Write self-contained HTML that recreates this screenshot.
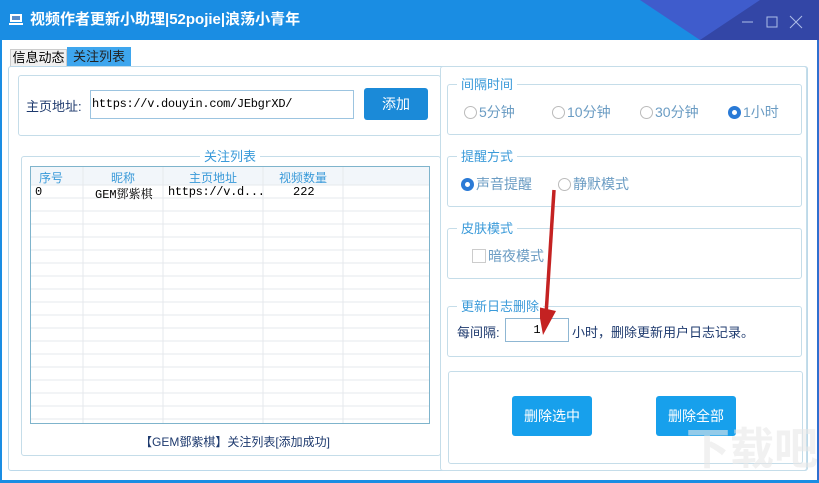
<!DOCTYPE html>
<html><head><meta charset="utf-8"><style>
*{margin:0;padding:0;box-sizing:border-box}
body{width:819px;height:483px;overflow:hidden;background:#fff;font-family:"Liberation Sans","Noto Sans CJK SC",sans-serif;font-size:13px;position:relative}
.a{position:absolute}
.box{position:absolute;border:1px solid #c5dde9;border-radius:3px}
.lg{position:absolute;background:#fff;color:#3a9ad9;padding:0 4px;font-size:13px;line-height:16px}
.rb{position:absolute;font-size:14px;color:#6b9cc3;line-height:16px;display:flex;align-items:center}
.rb i{display:inline-block;width:13px;height:13px;border:1px solid #bbb;border-radius:50%;margin-right:2px;background:#fff}
.rb i.on{border:4px solid #2a7ad6;}
.btn{position:absolute;background:#17a0ec;color:#fff;border-radius:3px;display:flex;align-items:center;justify-content:center;font-size:14px}
.mono{font-family:"Liberation Mono","Noto Serif CJK SC",monospace}
</style></head><body>
<div class="a" style="left:0;top:0;width:819px;height:40px;background:#1a8de3;overflow:hidden">
<svg class="a" style="left:0;top:0" width="819" height="40"><polygon points="640,0 819,0 819,40 700,40" fill="#3f5ccc"/><polygon points="760,0 819,0 819,40 700,40" fill="#3346a6"/></svg>
<svg class="a" style="left:9px;top:13px" width="16" height="14"><rect x="1" y="1" width="12" height="8" fill="#fff"/><rect x="3" y="3" width="8" height="4" fill="#5b8cc9"/><rect x="0" y="10" width="14" height="2" fill="#fff"/></svg>
<div class="a" style="left:30px;top:11px;color:#fff;font-size:15px;font-weight:bold;line-height:18px">视频作者更新小助理|52pojie|浪荡小青年</div>
<svg class="a" style="left:740px;top:14px" width="70" height="16"><line x1="2" y1="8" x2="13" y2="8" stroke="#aebde8"/><rect x="27" y="3" width="10" height="10" fill="none" stroke="#aebde8"/><path d="M50 2 L62 14 M62 2 L50 14" stroke="#aebde8"/></svg>
</div>
<div class="a" style="left:0;top:40px;width:2px;height:443px;background:#1a8de3"></div>
<div class="a" style="right:0;top:40px;width:2px;height:443px;background:#2f6fcf"></div>
<div class="a" style="left:0;top:480px;width:819px;height:3px;background:#1a8de3"></div>
<div class="a" style="left:10px;top:49px;width:57px;height:18px;background:#f0f0f0;border:1px solid #ccc;font-size:13px;line-height:16px;text-align:center">信息动态</div>
<div class="a" style="left:67px;top:47px;width:64px;height:20px;background:#3ea6ee;font-size:13px;line-height:20px;text-align:center;color:#222">关注列表</div>
<div class="box" style="left:8px;top:66px;width:800px;height:405px;border-color:#bcd9ea"></div>
<div class="box" style="left:18px;top:75px;width:423px;height:61px"></div>
<div class="a" style="left:26px;top:96px;color:#1e3a6e;font-size:13px">主页地址:</div>
<div class="a mono" style="left:90px;top:90px;width:264px;height:29px;border:1px solid #9cc4e0;font-size:12px;line-height:27px;padding-left:1px;letter-spacing:-0.3px">https://v.douyin.com/JEbgrXD/</div>
<div class="btn" style="left:364px;top:88px;width:64px;height:32px;background:#1b8ad8">添加</div>
<div class="box" style="left:21px;top:156px;width:420px;height:300px"></div>
<div class="lg" style="left:200px;top:149px">关注列表</div>
<div class="a" style="left:30px;top:166px;width:400px;height:258px;border:1px solid #7fb4cc;overflow:hidden;background:#fff">
<svg class="a" style="left:0;top:0" width="400" height="258">
<rect x="0" y="0" width="400" height="18" fill="#f2f6fa"/>
<g stroke="#e6e9ec">
<line x1="0" y1="18" x2="400" y2="18"/><line x1="0" y1="31" x2="400" y2="31"/><line x1="0" y1="44" x2="400" y2="44"/><line x1="0" y1="57" x2="400" y2="57"/><line x1="0" y1="70" x2="400" y2="70"/><line x1="0" y1="83" x2="400" y2="83"/><line x1="0" y1="96" x2="400" y2="96"/><line x1="0" y1="109" x2="400" y2="109"/><line x1="0" y1="122" x2="400" y2="122"/><line x1="0" y1="135" x2="400" y2="135"/><line x1="0" y1="148" x2="400" y2="148"/><line x1="0" y1="161" x2="400" y2="161"/><line x1="0" y1="174" x2="400" y2="174"/><line x1="0" y1="187" x2="400" y2="187"/><line x1="0" y1="200" x2="400" y2="200"/><line x1="0" y1="213" x2="400" y2="213"/><line x1="0" y1="226" x2="400" y2="226"/><line x1="0" y1="239" x2="400" y2="239"/><line x1="0" y1="252" x2="400" y2="252"/>
<line x1="52" y1="0" x2="52" y2="258"/><line x1="132" y1="0" x2="132" y2="258"/><line x1="232" y1="0" x2="232" y2="258"/><line x1="312" y1="0" x2="312" y2="258"/>
</g></svg>
<div class="a" style="left:8px;top:2px;color:#3a9ad9;font-size:12px">序号</div>
<div class="a" style="left:80px;top:2px;color:#3a9ad9;font-size:12px">昵称</div>
<div class="a" style="left:158px;top:2px;color:#3a9ad9;font-size:12px">主页地址</div>
<div class="a" style="left:248px;top:2px;color:#3a9ad9;font-size:12px">视频数量</div>
<div class="a mono" style="left:4px;top:18px;font-size:12px">0</div>
<div class="a mono" style="left:64px;top:18px;font-size:12px">GEM鄧紫棋</div>
<div class="a mono" style="left:137px;top:18px;font-size:12px;letter-spacing:-0.3px">https://v.d...</div>
<div class="a mono" style="left:262px;top:18px;font-size:12px">222</div>
</div>
<div class="a" style="left:140px;top:433px;color:#1e3a6e;font-size:12px">【GEM鄧紫棋】关注列表[添加成功]</div>
<div class="box" style="left:440px;top:66px;width:367px;height:405px;border-color:#c5dde9"></div>
<div class="box" style="left:447px;top:84px;width:355px;height:51px"></div>
<div class="lg" style="left:457px;top:77px">间隔时间</div>
<div class="rb" style="left:464px;top:104px"><i></i>5分钟</div>
<div class="rb" style="left:552px;top:104px"><i></i>10分钟</div>
<div class="rb" style="left:640px;top:104px"><i></i>30分钟</div>
<div class="rb" style="left:728px;top:104px"><i class="on"></i>1小时</div>
<div class="box" style="left:447px;top:156px;width:355px;height:51px"></div>
<div class="lg" style="left:457px;top:149px">提醒方式</div>
<div class="rb" style="left:461px;top:176px"><i class="on"></i>声音提醒</div>
<div class="rb" style="left:558px;top:176px"><i></i>静默模式</div>
<div class="box" style="left:447px;top:228px;width:355px;height:51px"></div>
<div class="lg" style="left:457px;top:221px">皮肤模式</div>
<div class="rb" style="left:472px;top:248px"><i style="border-radius:0;width:14px;height:14px;border-color:#ccc"></i>暗夜模式</div>
<div class="box" style="left:447px;top:306px;width:355px;height:51px"></div>
<div class="lg" style="left:457px;top:299px">更新日志删除</div>
<div class="a" style="left:457px;top:322px;color:#1e3a6e;font-size:13px">每间隔:</div>
<div class="a mono" style="left:505px;top:318px;width:64px;height:24px;border:1px solid #8fb7d3;text-align:center;line-height:22px;font-size:12px">1</div>
<div class="a" style="left:572px;top:322px;color:#1e3a6e;font-size:13px">小时，删除更新用户日志记录。</div>
<div class="box" style="left:448px;top:371px;width:355px;height:93px"></div>
<div class="btn" style="left:512px;top:396px;width:80px;height:40px">删除选中</div>
<div class="btn" style="left:656px;top:396px;width:80px;height:40px">删除全部</div>
<svg class="a" style="left:540px;top:185px" width="30" height="160"><line x1="14" y1="5" x2="6" y2="130" stroke="#c42222" stroke-width="3.5"/><polygon points="-2,122 16,126 3,150" fill="#c42222"/></svg>
<div class="a" style="left:686px;top:428px;font-size:44px;color:#e8e8e8;font-weight:bold;opacity:.6;line-height:44px">下载吧</div>
</body></html>
